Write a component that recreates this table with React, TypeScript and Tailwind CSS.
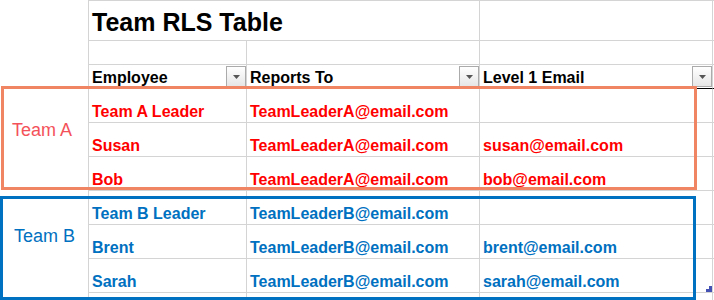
import React from "react";

const GRID = "border-[#d4d4d4]";

const TEAM_ROWS = [
  { team: "A", emp: "Team A Leader", rep: "TeamLeaderA@email.com", mail: "" },
  { team: "A", emp: "Susan", rep: "TeamLeaderA@email.com", mail: "susan@email.com" },
  { team: "A", emp: "Bob", rep: "TeamLeaderA@email.com", mail: "bob@email.com" },
  { team: "B", emp: "Team B Leader", rep: "TeamLeaderB@email.com", mail: "" },
  { team: "B", emp: "Brent", rep: "TeamLeaderB@email.com", mail: "brent@email.com" },
  { team: "B", emp: "Sarah", rep: "TeamLeaderB@email.com", mail: "sarah@email.com" },
];

const FilterButton = () => (
  <div className="w-[20px] h-[21px] shrink-0 mb-[1px] border border-[#ababab] bg-gradient-to-b from-white to-[#e6e6e6] flex items-center justify-center">
    <svg width="7" height="4" viewBox="0 0 7 4">
      <path d="M0 0h7L3.5 4z" fill="#555" />
    </svg>
  </div>
);

export default function App() {
  return (
    <div className="relative w-[714px] h-[300px] overflow-hidden bg-white font-['Liberation_Sans',Arial,sans-serif] font-bold text-[16px] leading-[18px]">
      {/* title row - text overflows over the B/C gridline like in Excel */}
      <div className="flex h-[41px]">
        <div className={`w-[89px] shrink-0 border-r ${GRID}`} />
        <div className={`w-[391px] shrink-0 flex items-end border-t border-b border-r ${GRID} pl-[3px] pb-[4px]`}>
          <span className="text-[25px] leading-[28px] text-black whitespace-nowrap">Team RLS Table</span>
        </div>
        <div className={`w-[233px] shrink-0 border-t border-b border-r ${GRID}`} />
        <div className={`flex-1 border-t border-b ${GRID}`} />
      </div>

      {/* empty row */}
      <div className="flex h-[24px]">
        <div className={`w-[89px] shrink-0 border-r ${GRID}`} />
        <div className={`w-[158px] shrink-0 border-r border-b ${GRID}`} />
        <div className={`w-[233px] shrink-0 border-r border-b ${GRID}`} />
        <div className={`w-[233px] shrink-0 border-r border-b ${GRID}`} />
        <div className={`flex-1 border-b ${GRID}`} />
      </div>

      {/* header row */}
      <div className="flex h-[24px] text-black">
        <div className={`w-[89px] shrink-0 border-r ${GRID}`} />
        <div className={`w-[158px] shrink-0 border-r ${GRID} border-b border-b-black flex items-end justify-between pl-[3px]`}>
          <span className="pb-[1px]">Employee</span>
          <FilterButton />
        </div>
        <div className={`w-[233px] shrink-0 border-r ${GRID} border-b border-b-black flex items-end justify-between pl-[3px]`}>
          <span className="pb-[1px]">Reports To</span>
          <FilterButton />
        </div>
        <div className={`w-[233px] shrink-0 border-r ${GRID} border-b border-b-black flex items-end justify-between pl-[3px]`}>
          <span className="pb-[1px]">Level 1 Email</span>
          <FilterButton />
        </div>
        <div className="flex-1 border-b border-black" />
      </div>

      {/* data rows */}
      {TEAM_ROWS.map((r, i) => {
        const color = r.team === "A" ? "text-[#ff0000]" : "text-[#0070c0]";
        const last = i === TEAM_ROWS.length - 1;
        return (
          <div key={i} className={`flex h-[34px] ${color}`}>
            <div className={`w-[89px] shrink-0 border-r ${GRID}`} />
            <div className={`w-[158px] shrink-0 border-r border-b ${GRID} flex items-end pl-[3px] pb-[1px] whitespace-nowrap`}>
              {r.emp}
            </div>
            <div className={`w-[233px] shrink-0 border-r border-b ${GRID} flex items-end pl-[3px] pb-[1px] whitespace-nowrap`}>
              {r.rep}
            </div>
            <div className={`relative w-[233px] shrink-0 border-r border-b ${GRID} flex items-end pl-[3px] pb-[1px] whitespace-nowrap`}>
              {r.mail}
              {last && (
                <svg className="absolute right-0 bottom-0" width="6" height="6" viewBox="0 0 6 6">
                  <path d="M3 0h3v6H0V3h3z" fill="#4452b4" />
                </svg>
              )}
            </div>
            <div className={`flex-1 border-b ${GRID}`} />
          </div>
        );
      })}

      {/* remainder of next row */}
      <div className="flex h-[8px]">
        <div className={`w-[89px] shrink-0 border-r ${GRID}`} />
        <div className={`w-[158px] shrink-0 border-r ${GRID}`} />
        <div className={`w-[233px] shrink-0 border-r ${GRID}`} />
        <div className={`w-[233px] shrink-0 border-r ${GRID}`} />
        <div className="flex-1" />
      </div>

      {/* team shapes */}
      <div className="absolute left-[1px] top-[86px] w-[696px] h-[104px] border-[3px] border-[#f08563] pl-[8px] pt-[31px]">
        <span className="block text-[18px] leading-[20px] font-normal text-[#f4525a]">Team A</span>
      </div>
      <div className="absolute left-0 top-[196px] w-[696px] h-[104px] border-[3px] border-[#0070c0] pl-[11px] pt-[27px]">
        <span className="block text-[18px] leading-[20px] font-normal text-[#0070c0]">Team B</span>
      </div>
    </div>
  );
}
